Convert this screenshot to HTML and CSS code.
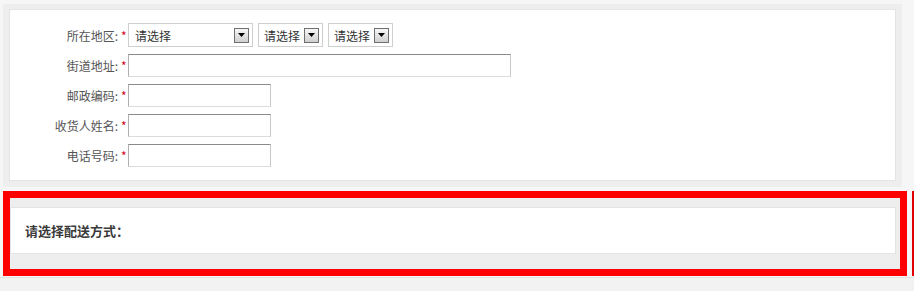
FILE: index.html
```html
<!DOCTYPE html>
<html lang="zh-CN">
<head>
    <meta charset="utf-8">
    <link rel="stylesheet" href="styles.css">
</head>
<body>
    <div class="box">
        <div class="panel form">
            <div class="row">
                <label class="lbl">所在地区:</label><span class="req">*</span>
                <div class="select wide"><span>请选择</span><i class="arrow"><svg width="7" height="4" viewBox="0 0 7 4"><path d="M0 0h7L3.5 4z" fill="#000"/></svg></i></div>
                <div class="select"><span>请选择</span><i class="arrow"><svg width="7" height="4" viewBox="0 0 7 4"><path d="M0 0h7L3.5 4z" fill="#000"/></svg></i></div>
                <div class="select"><span>请选择</span><i class="arrow"><svg width="7" height="4" viewBox="0 0 7 4"><path d="M0 0h7L3.5 4z" fill="#000"/></svg></i></div>
            </div>
            <div class="row">
                <label class="lbl">街道地址:</label><span class="req">*</span>
                <input type="text" class="txt long">
            </div>
            <div class="row">
                <label class="lbl">邮政编码:</label><span class="req">*</span>
                <input type="text" class="txt">
            </div>
            <div class="row">
                <label class="lbl">收货人姓名:</label><span class="req">*</span>
                <input type="text" class="txt">
            </div>
            <div class="row">
                <label class="lbl">电话号码:</label><span class="req">*</span>
                <input type="text" class="txt">
            </div>
        </div>
    </div>

    <div class="line">
        <div class="box marked">
            <div class="panel ship">请选择配送方式：</div>
        </div>
        <div class="edge"></div>
    </div>

    <div class="foot"></div>
</body>
</html>
```

FILE: styles.css
```css
/* General */
* {
    margin: 0;
    padding: 0;
    box-sizing: border-box;
}

body {
    background: #f6f6f6;
    font-family: "Noto Sans CJK SC", "Liberation Sans", sans-serif;
    font-size: 12px;
    color: #555;
    padding-top: 4px;
    overflow: hidden;
}

/* Gray frame with white panel */
.box {
    width: 899px;
    margin-left: 3px;
    background: #eeeeee;
    padding: 5px 6px 6px 6px;
}

.panel {
    background: #fff;
    border: 1px solid #e4e4e4;
}

/* Address form */
.form {
    padding: 13px 0 13px 0;
}

.row {
    display: flex;
    align-items: center;
    margin-bottom: 7px;
}

.row:last-child {
    margin-bottom: 0;
}

.lbl {
    width: 108px;
    text-align: right;
    line-height: 23px;
}

.req {
    width: 10px;
    padding-left: 3px;
    color: #d0021b;
    line-height: 23px;
}

.txt {
    width: 143px;
    height: 23px;
    border: 1px solid;
    border-color: #8a8a8a #c8c8c8 #dcdcdc #b0b0b0;
    background: #fff;
    outline: none;
}

.txt.long {
    width: 383px;
}

.select {
    width: 65px;
    height: 24px;
    margin-right: 5px;
    border: 1px solid #cfcfcf;
    background: #fff;
    display: flex;
    align-items: center;
    justify-content: space-between;
    padding: 0 3px 0 5px;
    color: #333;
    font-size: 12px;
}

.select.wide {
    width: 125px;
    padding-left: 6px;
}

.arrow {
    width: 15px;
    height: 15px;
    border: 1px solid #6f6f6f;
    background: linear-gradient(#f7f7f7, #cfcfcf);
    display: flex;
    align-items: center;
    justify-content: center;
}

/* Shipping section */
.line {
    display: flex;
    margin-top: 4px;
}

.marked {
    width: 904px;
    border: 7px solid #ff0000;
    padding: 9px 4px 12px 0;
}

.ship {
    height: 47px;
    padding-left: 14px;
    display: flex;
    align-items: center;
    font-size: 13px;
    font-weight: bold;
    color: #3a3a3a;
}

.edge {
    width: 2px;
    height: 85px;
    margin-left: 5px;
    background: #e00000;
}

.foot {
    margin-top: 1px;
    border-top: 1px solid #e2e2e2;
    background: #f2f2f2;
    height: 14px;
}
```
